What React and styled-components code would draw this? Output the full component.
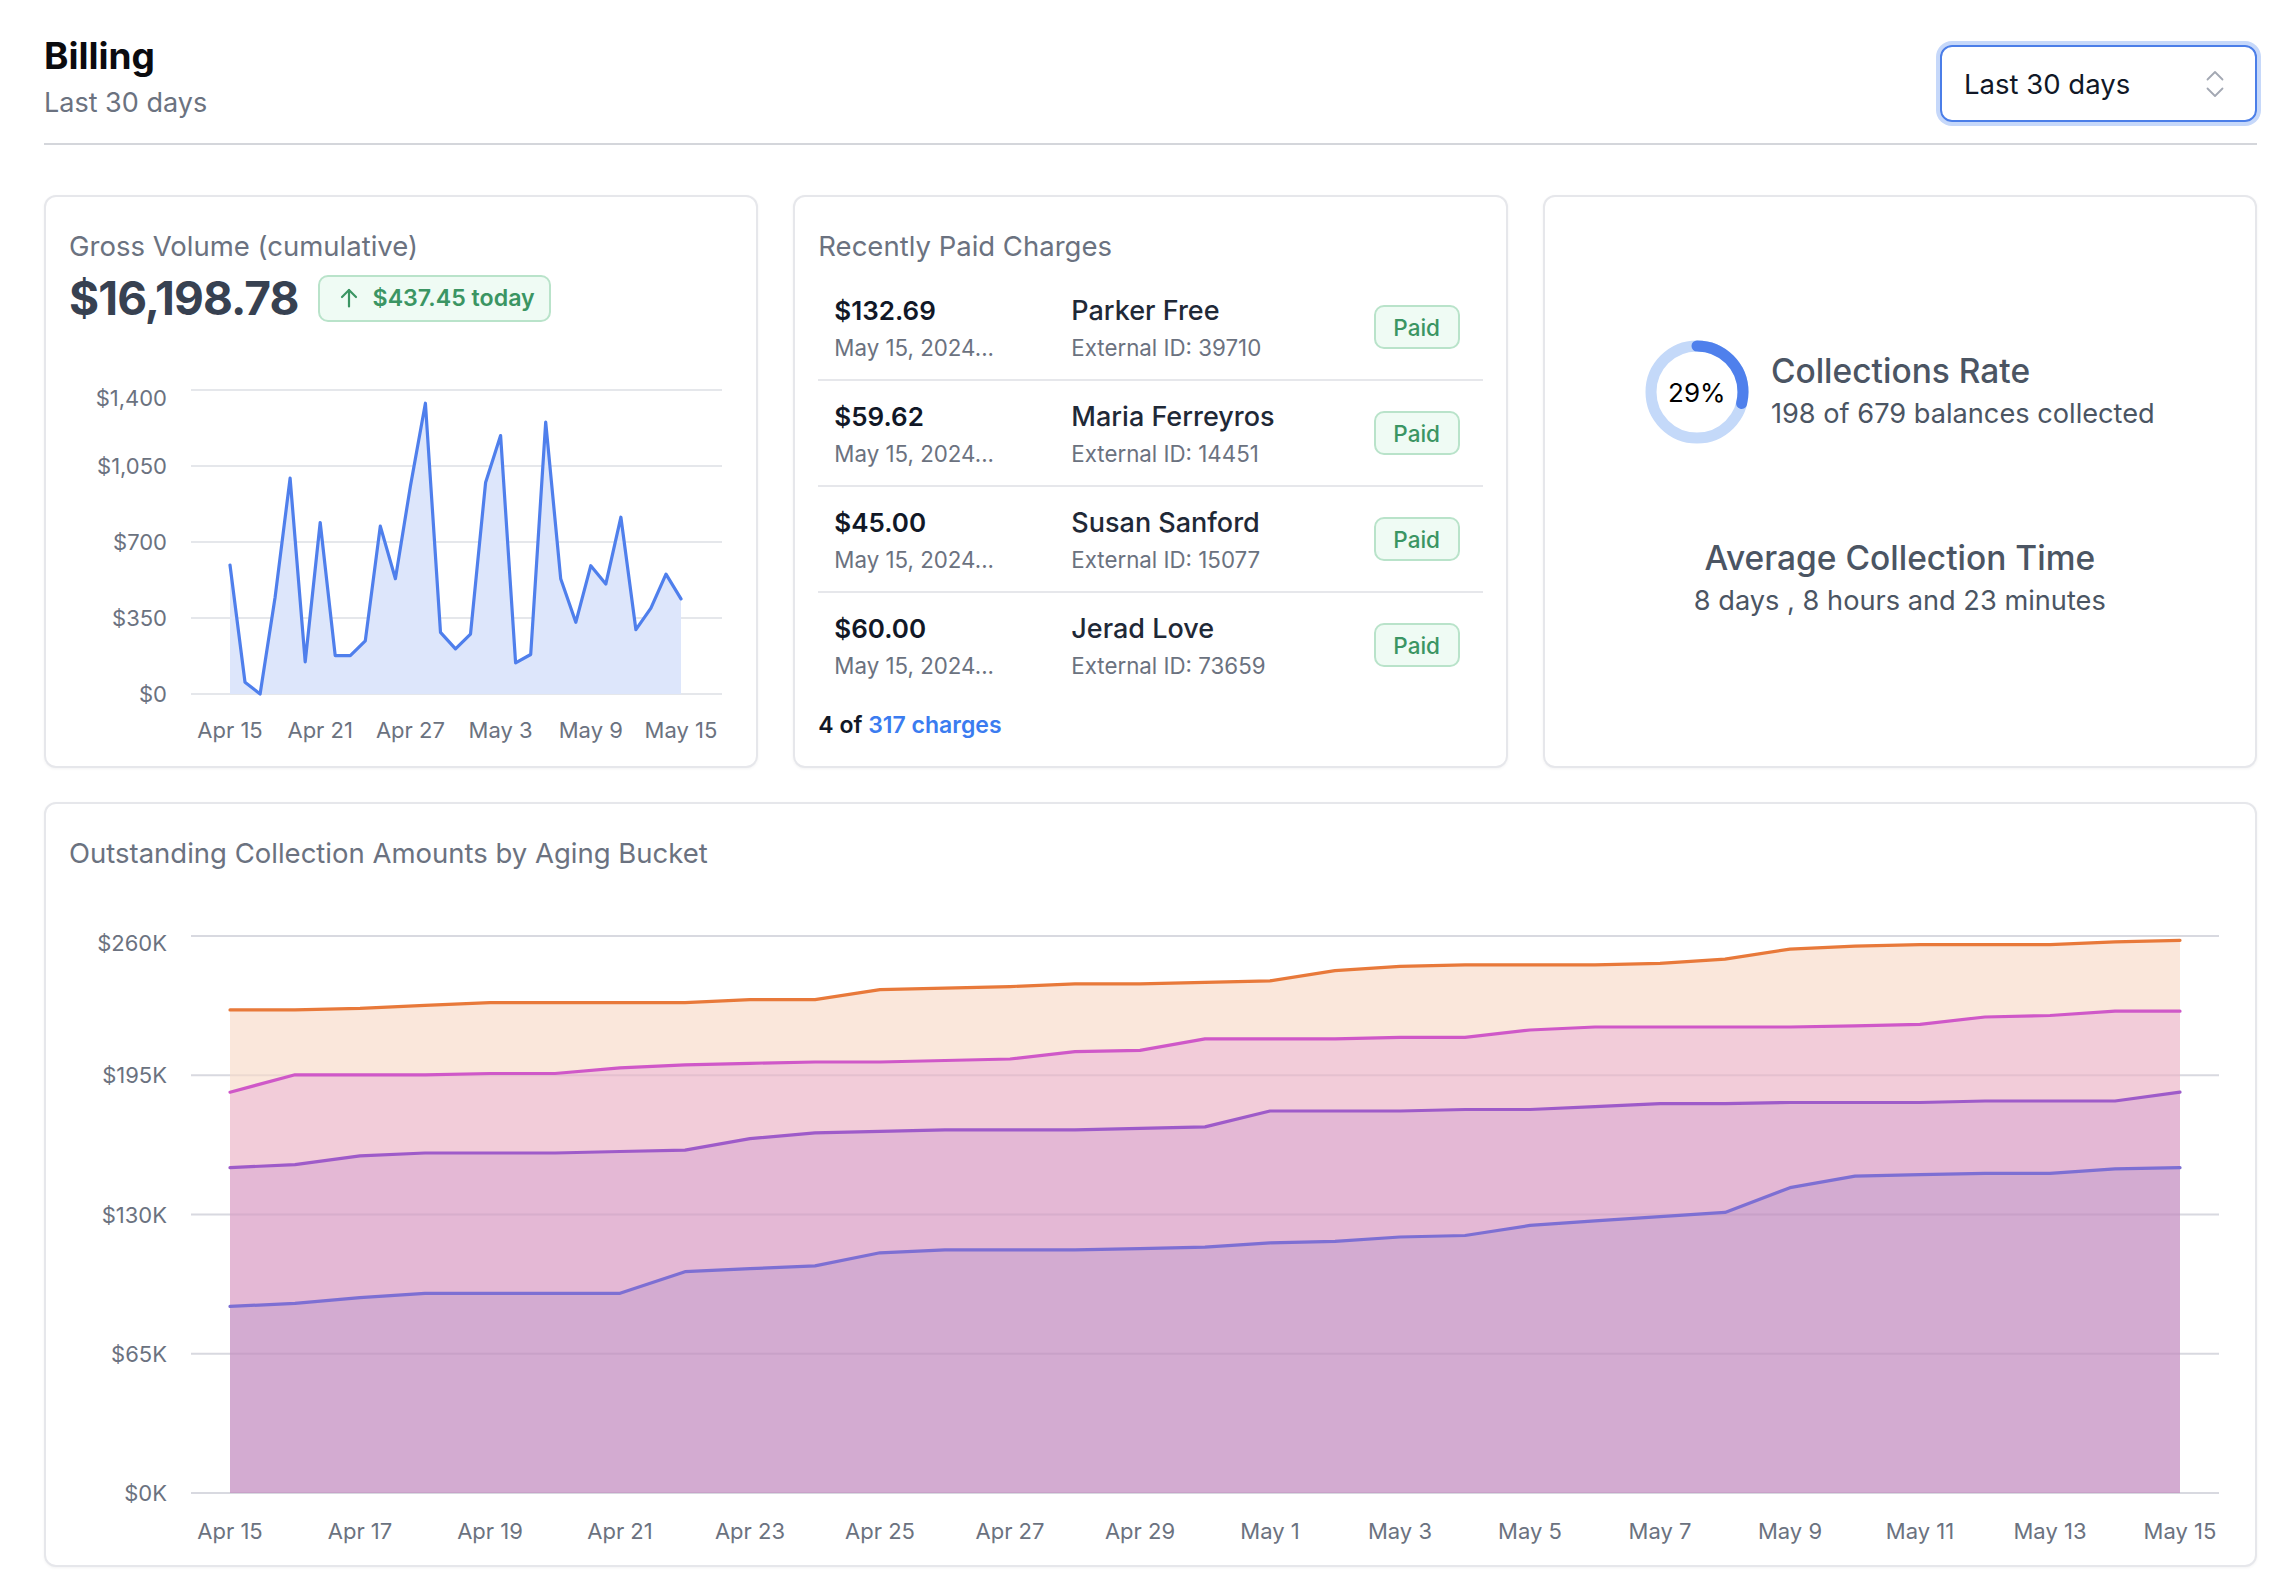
import React from "react";
import styled, { createGlobalStyle } from "styled-components";

const GlobalStyle = createGlobalStyle`
  body {
    margin: 0;
    background: #ffffff;
    font-family: Inter, "Noto Sans", sans-serif;
    color: #111827;
  }
`;

const gross = [
  594, 54, 0, 446, 994, 148, 790, 177, 177, 245, 773, 531, 957, 1339, 284, 208,
  276, 974, 1190, 143, 182, 1252, 531, 330, 591, 506, 814, 296, 395, 552, 438,
];

// stacked tops of each aging bucket, in $K
const bucket1 = [
  87.1, 88.5, 91.2, 93.2, 93.2, 93.2, 93.2, 103.3, 104.7, 106, 112.1, 113.5,
  113.5, 113.5, 114.1, 114.8, 116.8, 117.5, 119.5, 120.2, 124.9, 127, 129, 131,
  142.5, 147.9, 148.6, 149.2, 149.2, 151.3, 151.9,
];
const bucket2 = [
  151.9, 153.3, 157.4, 158.7, 158.7, 158.7, 159.4, 160, 165.4, 168.1, 168.8,
  169.5, 169.5, 169.5, 170.2, 170.9, 178.3, 178.3, 178.3, 179, 179, 180.3, 181.7,
  181.7, 182.3, 182.3, 182.3, 183, 183, 183, 187.1,
];
const bucket3 = [
  187.1, 195.2, 195.2, 195.2, 195.8, 195.8, 198.5, 199.9, 200.6, 201.2, 201.2,
  201.9, 202.6, 206, 206.6, 212, 212, 212, 212.7, 212.7, 216.1, 217.5, 217.5,
  217.5, 217.5, 218.1, 218.8, 222.2, 222.9, 224.9, 224.9,
];
const bucket4 = [
  225.5, 225.5, 226.2, 227.6, 228.9, 228.9, 228.9, 228.9, 230.3, 230.3, 235,
  235.7, 236.4, 237.7, 237.7, 238.4, 239.1, 243.8, 245.8, 246.5, 246.5, 246.5,
  247.2, 249.2, 253.9, 255.3, 256, 256, 256, 257.3, 258,
];

const charges = [
  { amount: "$132.69", name: "Parker Free", ext: "39710" },
  { amount: "$59.62", name: "Maria Ferreyros", ext: "14451" },
  { amount: "$45.00", name: "Susan Sanford", ext: "15077" },
  { amount: "$60.00", name: "Jerad Love", ext: "73659" },
];

const grossTicks = ["Apr 15", "Apr 21", "Apr 27", "May 3", "May 9", "May 15"];
const agingTicks = [
  "Apr 15", "Apr 17", "Apr 19", "Apr 21", "Apr 23", "Apr 25", "Apr 27", "Apr 29",
  "May 1", "May 3", "May 5", "May 7", "May 9", "May 11", "May 13", "May 15",
];

function App() {
  return (
    <>
      <GlobalStyle />
      <Page>
        <Header>
          <div>
            <Title>Billing</Title>
            <Subtitle>Last 30 days</Subtitle>
          </div>
          <Select>
            <span>Last 30 days</span>
            <svg width="20" height="28" viewBox="0 0 20 28" fill="none" stroke="#a3a8b3" strokeWidth="1.8" strokeLinecap="round" strokeLinejoin="round">
              <path d="M2.5 9.5L10 2l7.5 7.5" />
              <path d="M2.5 18.5L10 26l7.5-7.5" />
            </svg>
          </Select>
        </Header>

        <CardsRow>
          <Card>
            <CardTitle>Gross Volume (cumulative)</CardTitle>
            <Headline>
              <BigNumber>$16,198.78</BigNumber>
              <TrendBadge>
                <svg width="20" height="20" viewBox="0 0 20 20" fill="none" stroke="currentColor" strokeWidth="2.2" strokeLinecap="round" strokeLinejoin="round">
                  <path d="M10 18.5V2" />
                  <path d="M3 9l7-7 7 7" />
                </svg>
                $437.45 today
              </TrendBadge>
            </Headline>
            <GrossChart />
          </Card>

          <Card>
            <CardTitle>Recently Paid Charges</CardTitle>
            <ChargeList>
              {charges.map((c) => (
                <ChargeRow key={c.ext}>
                  <ChargeCol>
                    <Amount>{c.amount}</Amount>
                    <Muted>May 15, 2024...</Muted>
                  </ChargeCol>
                  <ChargeCol>
                    <Customer>{c.name}</Customer>
                    <Muted>External ID: {c.ext}</Muted>
                  </ChargeCol>
                  <PaidBadge>Paid</PaidBadge>
                </ChargeRow>
              ))}
            </ChargeList>
            <Footer>
              4 of <a>317 charges</a>
            </Footer>
          </Card>

          <StatsCard>
            <RateRow>
              <Donut pct={29} />
              <div>
                <StatTitle>Collections Rate</StatTitle>
                <StatText>198 of 679 balances collected</StatText>
              </div>
            </RateRow>
            <AvgBlock>
              <StatTitle>Average Collection Time</StatTitle>
              <StatText>8 days , 8 hours and 23 minutes</StatText>
            </AvgBlock>
          </StatsCard>
        </CardsRow>

        <WideCard>
          <CardTitle>Outstanding Collection Amounts by Aging Bucket</CardTitle>
          <AgingChart />
        </WideCard>
      </Page>
    </>
  );
}

function GrossChart() {
  const x0 = 161;
  const step = 451 / 30;
  const top = 30;
  const bottom = 334;
  const y = (v) => bottom - (v / 1400) * (bottom - top);
  const pts = gross.map((v, i) => [x0 + i * step, y(v)]);
  const line = pts.map((p, i) => `${i ? "L" : "M"}${p[0].toFixed(1)},${p[1].toFixed(1)}`).join(" ");
  const area = `${line} L${pts[30][0]},${bottom} L${x0},${bottom} Z`;
  const grid = [1400, 1050, 700, 350, 0];
  const labels = ["$1,400", "$1,050", "$700", "$350", "$0"];
  return (
    <ChartSvg width="662" height="395" viewBox="0 0 662 395">
      {grid.map((g, i) => (
        <g key={g}>
          <line x1="122" x2="653" y1={y(g)} y2={y(g)} stroke="#e5e7eb" strokeWidth="2" />
          <AxisText x="98" y={y(g) + (i === 0 ? 16 : 8)} textAnchor="end">{labels[i]}</AxisText>
        </g>
      ))}
      <path d={area} fill="#dde6fb" />
      <path d={line} fill="none" stroke="#4f7fec" strokeWidth="3.2" strokeLinejoin="round" strokeLinecap="round" />
      {grossTicks.map((t, i) => (
        <AxisText key={t} x={x0 + i * 6 * step} y="378" textAnchor="middle">{t}</AxisText>
      ))}
    </ChartSvg>
  );
}

function AgingChart() {
  const x0 = 161;
  const step = 65;
  const top = 35;
  const bottom = 592;
  const y = (v) => bottom - (v / 260) * (bottom - top);
  const toPts = (arr) => arr.map((v, i) => [x0 + i * step, y(v)]);
  const linePath = (pts) => pts.map((p, i) => `${i ? "L" : "M"}${p[0]},${p[1].toFixed(1)}`).join(" ");
  const band = (upper, lower) => {
    const up = toPts(upper);
    const low = lower ? toPts(lower).reverse() : [[x0 + 30 * step, bottom], [x0, bottom]];
    return `${linePath(up)} ${low.map((p) => `L${p[0]},${p[1].toFixed(1)}`).join(" ")} Z`;
  };
  const series = [
    { data: bucket4, below: bucket3, fill: "#fae7db", stroke: "#e8793a" },
    { data: bucket3, below: bucket2, fill: "#f2ccd9", stroke: "#cf58c8" },
    { data: bucket2, below: bucket1, fill: "#e4b8d5", stroke: "#9e5bc9" },
    { data: bucket1, below: null, fill: "#d3abd1", stroke: "#7d6fd3" },
  ];
  const grid = [260, 195, 130, 65, 0];
  return (
    <AgingSvg width="2159" height="650" viewBox="0 0 2159 650">
      {grid.map((g) => (
        <line key={g} x1="122" x2="2150" y1={y(g)} y2={y(g)} stroke="#e5e7eb" strokeWidth="2" />
      ))}
      {series.map((s) => (
        <path key={s.stroke} d={band(s.data, s.below)} fill={s.fill} />
      ))}
      {grid.map((g, i) => (
        <g key={g}>
          <line x1="122" x2="2150" y1={y(g)} y2={y(g)} stroke="rgba(60,40,80,0.07)" strokeWidth="2" />
          <AxisText x="98" y={y(g) + (i === 0 ? 15 : 8)} textAnchor="end">${g}K</AxisText>
        </g>
      ))}
      {series.map((s) => (
        <path key={s.stroke + "l"} d={linePath(toPts(s.data))} fill="none" stroke={s.stroke} strokeWidth="3.2" strokeLinejoin="round" strokeLinecap="round" />
      ))}
      {agingTicks.map((t, i) => (
        <AxisText key={t} x={x0 + i * 2 * step} y="638" textAnchor="middle">{t}</AxisText>
      ))}
    </AgingSvg>
  );
}

function Donut({ pct }) {
  const r = 46;
  const c = 2 * Math.PI * r;
  return (
    <DonutWrap>
      <svg width="104" height="104" viewBox="0 0 104 104">
        <circle cx="52" cy="52" r={r} fill="none" stroke="#c4d9f9" strokeWidth="11" />
        <circle
          cx="52"
          cy="52"
          r={r}
          fill="none"
          stroke="#4f80ec"
          strokeWidth="11"
          strokeLinecap="round"
          strokeDasharray={`${(c * pct) / 100} ${c}`}
          transform="rotate(-90 52 52)"
        />
      </svg>
      <DonutLabel>{pct}%</DonutLabel>
    </DonutWrap>
  );
}

const Page = styled.div`
  padding: 0 15px 20px 44px;
`;

const Header = styled.header`
  display: flex;
  justify-content: space-between;
  align-items: flex-start;
  padding: 34px 0 21px;
  border-bottom: 2px solid #d4d6db;
`;

const Title = styled.h1`
  margin: 0;
  font-size: 37px;
  line-height: 44px;
  font-weight: 700;
  color: #0b0b0f;
`;

const Subtitle = styled.div`
  margin-top: 8px;
  font-size: 27px;
  line-height: 34px;
  color: #6b7280;
`;

const Select = styled.div`
  margin-top: 11px;
  box-sizing: border-box;
  width: 317px;
  height: 77px;
  display: flex;
  align-items: center;
  justify-content: space-between;
  padding: 0 30px 0 22px;
  border: 2px solid #4b7ee8;
  border-radius: 12px;
  box-shadow: 0 0 0 4px #c6d8fa;
  font-size: 27.5px;
  color: #111827;
`;

const CardsRow = styled.div`
  display: grid;
  grid-template-columns: repeat(3, 1fr);
  gap: 35px;
  margin-top: 50px;
`;

const Card = styled.section`
  box-sizing: border-box;
  height: 573px;
  padding: 33px 23px 0;
  background: #fff;
  border: 2px solid #e6e7eb;
  border-radius: 12px;
  box-shadow: 0 1px 3px rgba(15, 23, 42, 0.05);
`;

const WideCard = styled(Card)`
  height: 765px;
  margin-top: 34px;
`;

const StatsCard = styled(Card)`
  padding: 0 0 6px;
  display: flex;
  flex-direction: column;
  align-items: center;
  justify-content: center;
  gap: 94px;
`;

const CardTitle = styled.h2`
  margin: 0;
  font-size: 27.5px;
  line-height: 32px;
  font-weight: 400;
  color: #6b7280;
`;

const Headline = styled.div`
  display: flex;
  align-items: center;
  gap: 19px;
  margin-top: 8px;
`;

const BigNumber = styled.div`
  font-size: 46px;
  line-height: 56px;
  font-weight: 700;
  color: #374151;
  letter-spacing: -0.9px;
`;

const TrendBadge = styled.div`
  display: flex;
  align-items: center;
  gap: 14px;
  height: 47px;
  box-sizing: border-box;
  padding: 0 14px 0 19px;
  border: 2px solid #b9e3ca;
  border-radius: 10px;
  background: #effbf4;
  color: #3b9563;
  font-size: 23.2px;
  font-weight: 600;
`;

const ChartSvg = styled.svg`
  display: block;
  margin-top: 34px;
  overflow: visible;
`;

const AgingSvg = styled(ChartSvg)`
  margin-top: 32px;
`;

const AxisText = styled.text`
  font-family: Inter, "Noto Sans", sans-serif;
  font-size: 22px;
  fill: #6b7280;
`;

const ChargeList = styled.div`
  margin-top: 13px;
`;

const ChargeRow = styled.div`
  display: grid;
  grid-template-columns: 237px 1fr auto;
  align-items: center;
  height: 106px;
  box-sizing: border-box;
  padding: 4px 23px 0 16px;
  border-bottom: 2px solid #e6e7eb;

  &:last-child {
    border-bottom: none;
    height: 104px;
  }
`;

const ChargeCol = styled.div`
  display: flex;
  flex-direction: column;
  gap: 6px;
`;

const Amount = styled.div`
  font-size: 26px;
  line-height: 32px;
  font-weight: 600;
  color: #111827;
`;

const Customer = styled.div`
  font-size: 27px;
  line-height: 32px;
  font-weight: 500;
  color: #1f2937;
`;

const Muted = styled.div`
  font-size: 22.3px;
  line-height: 30px;
  color: #6b7280;
`;

const PaidBadge = styled.div`
  box-sizing: border-box;
  width: 86px;
  height: 44px;
  margin-top: -4px;
  display: flex;
  align-items: center;
  justify-content: center;
  border: 2px solid #b9e3ca;
  border-radius: 10px;
  background: #effbf4;
  color: #3b9563;
  font-size: 22.5px;
  font-weight: 500;
`;

const Footer = styled.div`
  margin-top: 13px;
  font-size: 23px;
  line-height: 30px;
  font-weight: 600;
  color: #111827;

  a {
    color: #3b7cf0;
  }
`;

const RateRow = styled.div`
  display: flex;
  align-items: center;
  gap: 22px;

  & > div:last-child {
    margin-top: -4px;
  }
`;

const DonutWrap = styled.div`
  position: relative;
  width: 104px;
  height: 104px;

  svg {
    display: block;
  }
`;

const DonutLabel = styled.div`
  position: absolute;
  inset: 0;
  display: flex;
  align-items: center;
  justify-content: center;
  font-size: 26px;
  color: #000;
`;

const StatTitle = styled.div`
  font-size: 33.5px;
  line-height: 40px;
  font-weight: 500;
  color: #4b5563;
`;

const StatText = styled.div`
  margin-top: 7px;
  font-size: 27.2px;
  line-height: 32px;
  color: #4b5563;
`;

const AvgBlock = styled.div`
  text-align: center;
`;

export default App;
